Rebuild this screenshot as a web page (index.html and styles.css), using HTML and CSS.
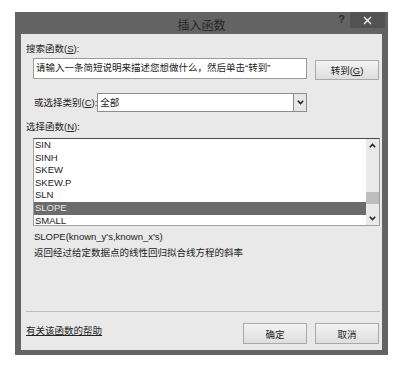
FILE: index.html
```html
<!DOCTYPE html>
<html lang="zh-CN">
<head>
    <meta charset="UTF-8">
    <title>插入函数</title>
    <link rel="stylesheet" href="styles.css">
</head>
<body>
    <div class="dialog">
        <div class="title-bar">
            <span class="title">插入函数</span>
            <span class="help-btn">?</span>
            <span class="close-btn">
                <svg width="9" height="9" viewBox="0 0 9 9"><path d="M1 1 L8 8 M8 1 L1 8" stroke="#f2f2f2" stroke-width="1.4"/></svg>
            </span>
        </div>

        <div class="content">
            <div class="label first">搜索函数(<u>S</u>):</div>
            <div class="search-row">
                <div class="search-box">请输入一条简短说明来描述您想做什么，然后单击“转到”</div>
                <button class="btn go-btn">转到(<u>G</u>)</button>
            </div>

            <div class="category-row">
                <span class="cat-label">或选择类别(<u>C</u>):</span>
                <div class="select">
                    <span class="select-value">全部</span>
                    <span class="select-arrow">
                        <svg width="7" height="5" viewBox="0 0 7 5"><path d="M0.8 0.8 L3.5 3.6 L6.2 0.8" fill="none" stroke="#222" stroke-width="1.5"/></svg>
                    </span>
                </div>
            </div>

            <div class="label">选择函数(<u>N</u>):</div>
            <div class="func-list">
                <ul class="items">
                    <li>SIN</li>
                    <li>SINH</li>
                    <li>SKEW</li>
                    <li>SKEW.P</li>
                    <li>SLN</li>
                    <li class="selected">SLOPE</li>
                    <li>SMALL</li>
                </ul>
                <div class="scrollbar">
                    <span class="scroll-btn">
                        <svg width="7" height="5" viewBox="0 0 7 5"><path d="M0.8 4.2 L3.5 1.4 L6.2 4.2" fill="none" stroke="#222" stroke-width="1.5"/></svg>
                    </span>
                    <div class="track"><div class="thumb"></div></div>
                    <span class="scroll-btn">
                        <svg width="7" height="5" viewBox="0 0 7 5"><path d="M0.8 0.8 L3.5 3.6 L6.2 0.8" fill="none" stroke="#222" stroke-width="1.5"/></svg>
                    </span>
                </div>
            </div>

            <div class="signature">SLOPE(known_y's,known_x's)</div>
            <div class="description">返回经过给定数据点的线性回归拟合线方程的斜率</div>

            <div class="separator"></div>

            <div class="bottom-row">
                <a class="help-link" href="#">有关该函数的帮助</a>
                <button class="btn">确定</button>
                <button class="btn">取消</button>
            </div>
        </div>
    </div>
</body>
</html>
```

FILE: styles.css
```css
body {
    margin: 0;
    padding: 12px 0 0 15px;
    background-color: #ffffff;
    font-family: "Liberation Sans", "Noto Sans CJK SC", sans-serif;
    font-size: 9.5px;
    color: #222;
}

.dialog {
    width: 361px;
    padding: 0 6px 5px;
    background-color: #636363;
}

.title-bar {
    position: relative;
    height: 22px;
    text-align: center;
}

.title {
    display: inline-block;
    margin-top: 5px;
    font-family: "Noto Sans CJK SC", sans-serif;
    font-size: 12px;
    line-height: 15px;
    color: #262626;
}

.help-btn {
    position: absolute;
    right: 37px;
    top: 1px;
    font-size: 11px;
    font-weight: bold;
    color: #2a2a2a;
    line-height: 13px;
}

.close-btn {
    position: absolute;
    right: -3px;
    top: 0;
    width: 35px;
    height: 16px;
    background-color: #525252;
    display: flex;
    align-items: center;
    justify-content: center;
}

.content {
    height: 316px;
    padding: 0 3px 0 5px;
    background-color: #e9e9e9;
    box-sizing: border-box;
    overflow: hidden;
}

.label {
    margin-top: 8px;
    line-height: 14px;
}

.search-row {
    display: flex;
    align-items: flex-start;
    margin: 2px 0 0 7px;
}

.search-box {
    width: 274px;
    height: 21px;
    box-sizing: border-box;
    padding: 2px 0 0 2px;
    line-height: 14px;
    background-color: #fff;
    border: 1px solid #9a9a9a;
}

.btn {
    width: 64px;
    height: 21px;
    padding: 0;
    font-family: "Liberation Sans", "Noto Sans CJK SC", sans-serif;
    font-size: 9.5px;
    color: #222;
    background: linear-gradient(#f3f3f3, #dedede);
    border: 1px solid #a9a9a9;
    border-radius: 0;
}

.go-btn {
    height: 20px;
    margin: 2px 0 0 8px;
}

.category-row {
    display: flex;
    align-items: center;
    justify-content: space-between;
    width: 273px;
    margin: 13px 0 0 8px;
}

.cat-label {
    white-space: nowrap;
    line-height: 14px;
}

.select {
    display: flex;
    flex: none;
    width: 210px;
    height: 19px;
    box-sizing: border-box;
    background-color: #fff;
    border: 1px solid #8c8c8c;
}

.select-value {
    flex: 1;
    padding-left: 2px;
    line-height: 17px;
}

.select-arrow {
    width: 12px;
    display: flex;
    align-items: center;
    justify-content: center;
    background-color: #e6e6e6;
    border-left: 1px solid #8c8c8c;
}

.func-list {
    display: flex;
    width: 347px;
    height: 88px;
    box-sizing: border-box;
    margin: 4px 0 0 7px;
    background-color: #fff;
    border: 1px solid #a0a0a0;
    border-top-color: #4a4a4a;
}

.items {
    flex: 1;
    margin: 0;
    padding: 0;
    list-style: none;
}

.items li {
    height: 12.6px;
    line-height: 12.6px;
    padding-left: 1px;
}

.items li.selected {
    background-color: #6b6b6b;
    color: #e6e6e6;
}

.scrollbar {
    width: 13px;
    display: flex;
    flex-direction: column;
    background-color: #e9e9e9;
}

.scroll-btn {
    height: 13px;
    display: flex;
    align-items: center;
    justify-content: center;
}

.track {
    flex: 1;
}

.thumb {
    margin-top: 40px;
    height: 12px;
    background-color: #bdbdbd;
}

.signature {
    margin: 4px 0 0 8px;
    line-height: 14px;
}

.description {
    margin: 2px 0 0 8px;
    line-height: 14px;
}

.separator {
    width: 354px;
    height: 1px;
    margin-top: 51px;
    background-color: #bdbdbd;
}

.bottom-row {
    display: flex;
    align-items: flex-start;
    margin-top: 11px;
    gap: 8px;
}

.help-link {
    flex: 1;
    margin-top: 1px;
    line-height: 14px;
    color: #222;
    text-decoration: underline;
}
```
